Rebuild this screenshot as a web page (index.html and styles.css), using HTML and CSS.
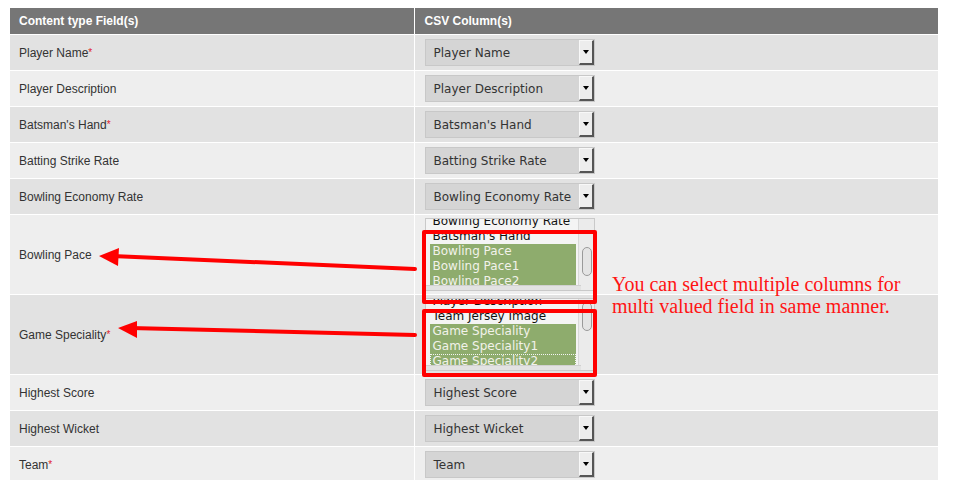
FILE: index.html
```html
<!DOCTYPE html>
<html>
<head>
<meta charset="utf-8">
<link rel="stylesheet" href="styles.css">
</head>
<body>
<div class="page">
<table class="map">
  <thead>
    <tr><th class="c1">Content type Field(s)</th><th class="c2">CSV Column(s)</th></tr>
  </thead>
  <tbody>
    <tr class="odd"><td class="lbl">Player Name<span class="req">*</span></td><td class="val"><div class="sel"><span>Player Name</span><i class="btn"><b></b></i></div></td></tr>
    <tr class="even"><td class="lbl">Player Description</td><td class="val"><div class="sel"><span>Player Description</span><i class="btn"><b></b></i></div></td></tr>
    <tr class="odd"><td class="lbl">Batsman's Hand<span class="req">*</span></td><td class="val"><div class="sel"><span>Batsman's Hand</span><i class="btn"><b></b></i></div></td></tr>
    <tr class="even"><td class="lbl">Batting Strike Rate</td><td class="val"><div class="sel"><span>Batting Strike Rate</span><i class="btn"><b></b></i></div></td></tr>
    <tr class="odd"><td class="lbl">Bowling Economy Rate</td><td class="val"><div class="sel"><span>Bowling Economy Rate</span><i class="btn"><b></b></i></div></td></tr>
    <tr class="even tall"><td class="lbl">Bowling Pace</td><td class="val"><div class="list"><div class="items s1"><div class="it">Bowling Economy Rate</div><div class="it">Batsman's Hand</div><div class="it on">Bowling Pace</div><div class="it on">Bowling Pace1</div><div class="it on">Bowling Pace2</div></div><div class="vbar"><div class="thumb t1"></div></div><div class="hbar"></div></div></td></tr>
    <tr class="odd tall"><td class="lbl">Game Speciality<span class="req">*</span></td><td class="val"><div class="list"><div class="items s2"><div class="it">Player Description</div><div class="it">Team Jersey Image</div><div class="it on">Game Speciality</div><div class="it on">Game Speciality1</div><div class="it on focus">Game Speciality2</div></div><div class="vbar"><div class="thumb t2"></div></div><div class="hbar"></div></div></td></tr>
    <tr class="even"><td class="lbl">Highest Score</td><td class="val"><div class="sel"><span>Highest Score</span><i class="btn"><b></b></i></div></td></tr>
    <tr class="odd"><td class="lbl">Highest Wicket</td><td class="val"><div class="sel"><span>Highest Wicket</span><i class="btn"><b></b></i></div></td></tr>
    <tr class="even"><td class="lbl">Team<span class="req">*</span></td><td class="val"><div class="sel"><span>Team</span><i class="btn"><b></b></i></div></td></tr>
  </tbody>
</table>

<div class="box box1"></div>
<div class="box box2"></div>
<p class="note">You can select multiple columns for<br>multi valued field in same manner.</p>
<svg class="arrows" width="972" height="480" viewBox="0 0 972 480">
  <line x1="415" y1="269" x2="112" y2="256" stroke="#ff0000" stroke-width="4" stroke-linecap="round"/>
  <polygon points="99,256 119,248 118,266" fill="#ff0000"/>
  <line x1="415" y1="335" x2="130" y2="328" stroke="#ff0000" stroke-width="4" stroke-linecap="round"/>
  <polygon points="118,328 137,321 137,338" fill="#ff0000"/>
</svg>
</div>
</body>
</html>
```
FILE: styles.css
```css
html, body {
  margin: 0;
  padding: 0;
  background: #ffffff;
}
.page {
  position: relative;
  width: 972px;
  height: 480px;
  overflow: hidden;
  padding: 8px 0 0 10px;
  box-sizing: border-box;
  font-family: "Liberation Sans", Arial, sans-serif;
}
.map {
  border-collapse: collapse;
  width: 928px;
  table-layout: fixed;
}
.map th {
  background: #767676;
  color: #ffffff;
  font-size: 12px;
  font-weight: bold;
  text-align: left;
  height: 26px;
  padding: 0 0 0 9px;
  box-sizing: border-box;
  border-bottom: 1px solid #ffffff;
}
.map th.c1 { width: 404px; border-right: 1px solid #ffffff; }
.map th.c2 { padding-left: 10px; }
.map td {
  height: 35px;
  padding: 0;
  border-bottom: 1px solid #ffffff;
  box-sizing: content-box;
}
.map tr.tall td { height: 79px; }
.odd td { background: #e2e2e2; }
.even td { background: #eeeeee; }
.lbl {
  font-size: 12px;
  color: #333333;
  padding-left: 9px !important;
  padding-top: 2px !important;
  height: 33px !important;
  border-right: 1px solid #ffffff;
}
.map tr.tall td.lbl { height: 77px !important; }
.req { color: #e0202a; font-size: 10px; vertical-align: 1px; }
.val { padding-left: 10px !important; }
.sel {
  width: 170px;
  height: 27px;
  box-sizing: border-box;
  border: 1px solid #c8c8c8;
  background: #d5d5d5;
  display: flex;
  align-items: center;
  justify-content: space-between;
  font-family: "DejaVu Sans", sans-serif;
  font-size: 12px;
  color: #333333;
  white-space: nowrap;
}
.sel span { padding-left: 8px; padding-top: 1px; }
.btn {
  flex: none;
  width: 15px;
  height: 25px;
  box-sizing: border-box;
  background: #ededed;
  border-top: 1px solid #f8f8f8;
  border-left: 1px solid #f8f8f8;
  border-right: 2px solid #555555;
  border-bottom: 2px solid #555555;
  display: flex;
  align-items: center;
  justify-content: center;
}
.btn b {
  width: 0; height: 0;
  border-left: 3px solid transparent;
  border-right: 3px solid transparent;
  border-top: 4px solid #000000;
  margin-left: 1px;
}
.list {
  position: relative;
  width: 170px;
  height: 73px;
  box-sizing: border-box;
  border: 1px solid #c9c9c9;
  background: #f4f4f4;
  overflow: hidden;
  font-family: "DejaVu Sans", sans-serif;
  font-size: 12px;
}
.items { margin-left: 4px; width: 146px; }
.items.s1 { margin-top: -5px; }
.items.s2 { margin-top: -5px; }
.it {
  height: 15px;
  line-height: 15px;
  padding-left: 3px;
  color: #111111;
  white-space: nowrap;
  overflow: hidden;
}
.it.on { background: #8eac6d; color: #f2f2ea; }
.it.focus { outline: 1px dotted #f4f4f4; outline-offset: -1px; }
.vbar {
  position: absolute;
  top: 0; right: 0;
  width: 15px;
  height: 100%;
  background: #ebebeb;
  border-left: 1px solid #d8d8d8;
}
.thumb {
  position: absolute;
  left: 3px;
  width: 8px;
  border: 1px solid #9a9a9a;
  border-radius: 5px;
  background: #e4e4e4;
}
.t1 { top: 28px; height: 27px; }
.t2 { top: 3px; height: 27px; }
.hbar {
  position: absolute;
  left: 0; bottom: 0;
  width: 155px;
  height: 4px;
  background: #e2e2e2;
  border-top: 1px solid #d0d0d0;
}
.box {
  position: absolute;
  border: 4px solid #ff0000;
  border-radius: 2px;
  box-sizing: border-box;
}
.box1 { left: 422px; top: 230px; width: 175px; height: 74px; }
.box2 { left: 422px; top: 309px; width: 175px; height: 68px; }
.note {
  position: absolute;
  left: 612px;
  top: 273px;
  margin: 0;
  font-family: "Liberation Serif", "Times New Roman", serif;
  font-size: 20px;
  line-height: 22px;
  color: #ff1414;
}
.arrows {
  position: absolute;
  left: 0;
  top: 0;
}
```
